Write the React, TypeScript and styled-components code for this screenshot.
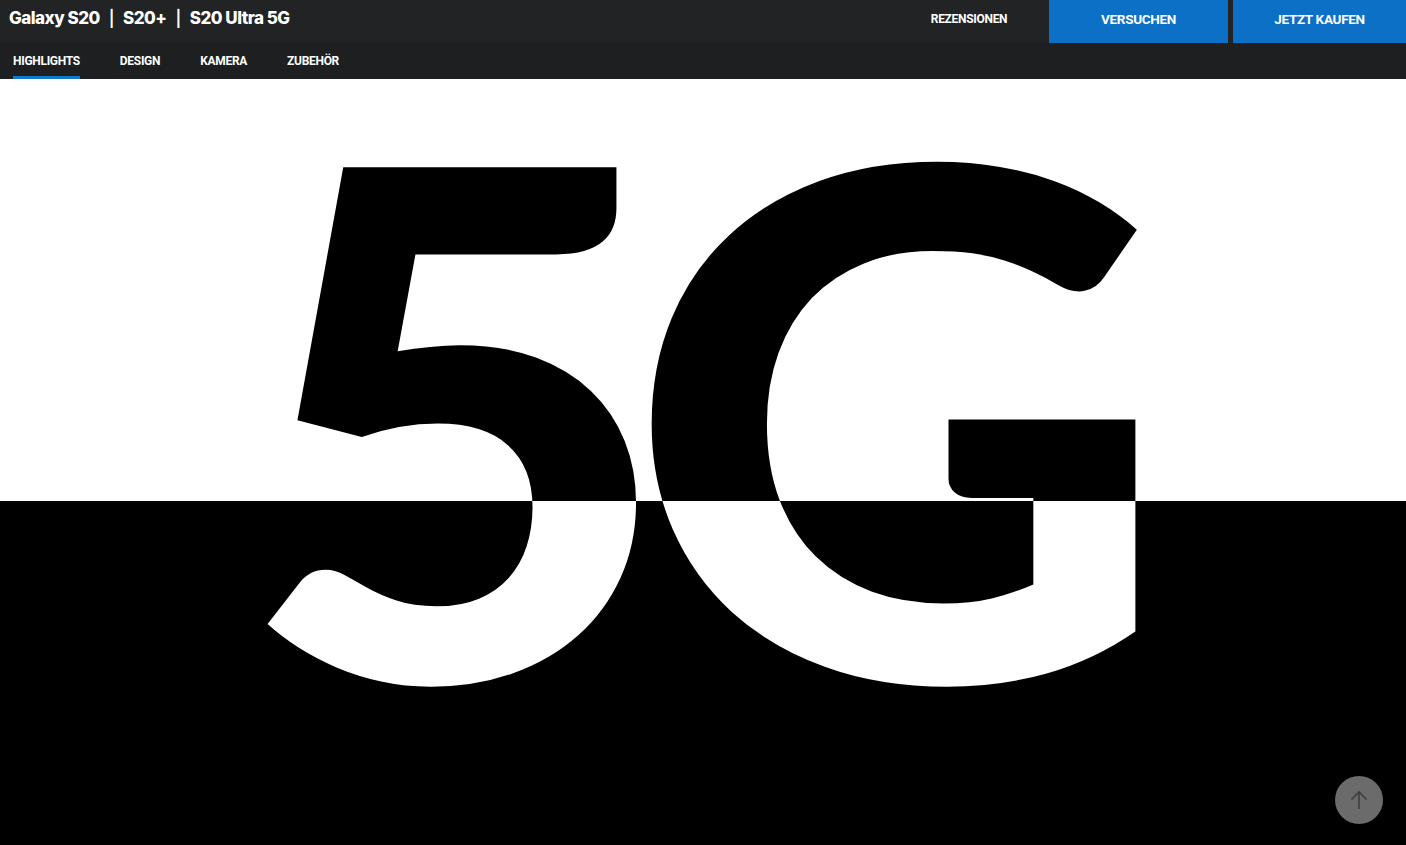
import React from "react";
import styled, { createGlobalStyle } from "styled-components";

const Global = createGlobalStyle`
  html, body { margin: 0; padding: 0; background: #000; }
  body { font-family: Roboto, "Liberation Sans", sans-serif; overflow: hidden; }
  * { box-sizing: border-box; }
`;

const Page = styled.div`
  display: flex;
  flex-direction: column;
  width: 1406px;
  height: 845px;
`;

const TopBar = styled.header`
  position: relative;
  z-index: 1;
  display: flex;
  align-items: stretch;
  height: 43px;
  background: #212325;
`;

const Title = styled.h1`
  margin: 0;
  flex: 1;
  display: flex;
  align-items: center;
  gap: 9px;
  padding-left: 9px;
  padding-bottom: 7px;
  font-family: Inter, "Noto Sans", sans-serif;
  font-weight: 800;
  font-size: 17px;
  letter-spacing: -0.5px;
  color: #fff;
`;

const Sep = styled.span`
  font-weight: 600;
  font-size: 16px;
`;

const Actions = styled.div`
  display: flex;
  align-items: stretch;
  gap: 5px;
`;

const ActionLink = styled.a<{ $primary?: boolean; $w: number }>`
  display: flex;
  align-items: center;
  justify-content: center;
  width: ${(p) => p.$w}px;
  padding-bottom: 6px;
  background: ${(p) => (p.$primary ? "#0b70c6" : "transparent")};
  color: #fff;
  font-family: Roboto, sans-serif;
  font-weight: 700;
  font-size: ${(p) => (p.$primary ? "13.5px" : "12px")};
  letter-spacing: -0.3px;
  text-decoration: none;
`;

const SubNav = styled.nav`
  position: relative;
  z-index: 1;
  display: flex;
  align-items: stretch;
  height: 36px;
  background: #1d1f21;
  padding-left: 13px;
  gap: 40px;
`;

const NavItem = styled.a<{ $active?: boolean }>`
  display: flex;
  align-items: center;
  padding-top: 2px;
  color: #fff;
  font-family: Roboto, sans-serif;
  font-weight: 700;
  font-size: 12px;
  letter-spacing: -0.3px;
  text-decoration: none;
  border-bottom: 3px solid ${(p) => (p.$active ? "#1179c9" : "transparent")};
`;

const Hero = styled.section`
  flex: 1;
  display: flex;
  justify-content: center;
  align-items: flex-start;
  isolation: isolate;
  background: linear-gradient(#fff 0 422.5px, #000 422.5px 100%);
`;

const BigText = styled.div`
  margin-top: 10px;
  margin-left: -10px;
  color: #fff;
  mix-blend-mode: difference;
  font-family: Lato, Inter, sans-serif;
  font-weight: 900;
  font-size: 708px;
  line-height: 0.9;
  letter-spacing: -45px;
  transform: translateX(-17px) scaleX(1.06);
`;

const ToTop = styled.button`
  position: fixed;
  right: 23px;
  bottom: 21px;
  width: 48px;
  height: 48px;
  border: none;
  border-radius: 50%;
  background: #6b6b6b;
  display: flex;
  align-items: center;
  justify-content: center;
  padding: 0;
`;

export default function App() {
  return (
    <>
      <Global />
      <Page>
        <TopBar>
          <Title>
            <span>Galaxy S20</span>
            <Sep>|</Sep>
            <span>S20+</span>
            <Sep>|</Sep>
            <span>S20 Ultra 5G</span>
          </Title>
          <Actions>
            <ActionLink $w={150}>REZENSIONEN</ActionLink>
            <ActionLink $primary $w={179}>VERSUCHEN</ActionLink>
            <ActionLink $primary $w={173}>JETZT KAUFEN</ActionLink>
          </Actions>
        </TopBar>
        <SubNav>
          <NavItem $active>HIGHLIGHTS</NavItem>
          <NavItem>DESIGN</NavItem>
          <NavItem>KAMERA</NavItem>
          <NavItem>ZUBEHÖR</NavItem>
        </SubNav>
        <Hero>
          <BigText>5G</BigText>
        </Hero>
      </Page>
      <ToTop aria-label="Nach oben">
        <svg width="22" height="22" viewBox="0 0 22 22" fill="none" stroke="#3e3e3e" strokeWidth="1.6">
          <path d="M11 20V3M3.5 10.5L11 3l7.5 7.5" />
        </svg>
      </ToTop>
    </>
  );
}
